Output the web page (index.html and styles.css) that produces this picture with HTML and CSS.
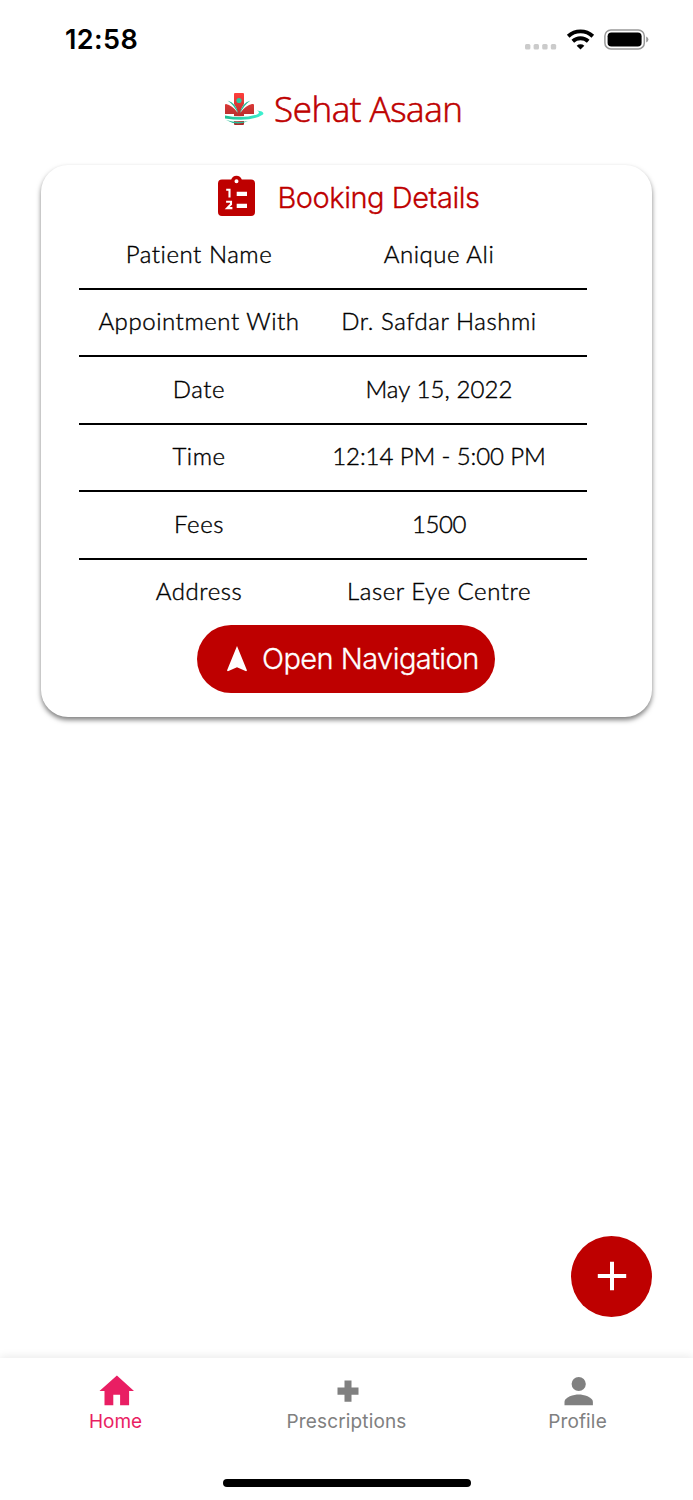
FILE: index.html
```html
<!DOCTYPE html>
<html lang="en">
<head>
<meta charset="utf-8">
<title>Sehat Asaan</title>
<link rel="stylesheet" href="styles.css">
</head>
<body>
<div class="screen">
  <header class="status">
    <span class="clock">12:58</span>
    <svg class="indicators" width="126" height="24" viewBox="0 0 126 24">
      <g fill="#cbcbcb"><rect x="1" y="16" width="5.4" height="5.4" rx="1.5"/><rect x="9.6" y="16" width="5.4" height="5.4" rx="1.5"/><rect x="18.2" y="16" width="5.4" height="5.4" rx="1.5"/><rect x="26.8" y="16" width="5.4" height="5.4" rx="1.5"/></g>
      <g fill="none" stroke="#000" stroke-width="3.9"><path d="M44.2 8.2a18.2 18.2 0 0 1 24.6 0"/><path d="M48.8 13.3a11.4 11.4 0 0 1 15.4 0"/></g>
      <path d="M56.5 21.5l-3.800-3.800a5.600 5.600 0 0 1 7.600 0z"/>
      <rect x="80.9" y="1.9" width="39.4" height="19" rx="6" fill="none" stroke="#999" stroke-width="1.5"/>
      <rect x="83.6" y="4.5" width="34" height="14" rx="3.8"/>
      <path d="M122.2 8.5q2.2 1 2.2 3t-2.2 3z" fill="#999"/>
    </svg>
  </header>
  <div class="brand">
    <svg width="42" height="36" viewBox="0 0 42 36">
      <defs>
        <linearGradient id="cross" x1="0" y1="0" x2="0" y2="1"><stop offset="0" stop-color="#ff3f3c"/><stop offset=".55" stop-color="#c63332"/><stop offset="1" stop-color="#a92829"/></linearGradient>
        <linearGradient id="swoosh"><stop offset="0" stop-color="#20bd92"/><stop offset="1" stop-color="#3df1d0"/></linearGradient>
      </defs>
      <path d="M11 3q0-1 1-1h8q1 0 1 1v10h9q1 0 1 1v9H21v10q0 1-1 1h-8q-1 0-1-1V23H2v-9q0-1 1-1h8z" fill="url(#cross)"/>
      <path d="M3.500 8.500q9 2 11 13Q9 14 3 13zM28.500 8.500q-9 2-11 13Q23 14 29 13z" fill="#fff"/>
      <path d="M4.500 9.500q9 2.500 10.500 13Q11 14 4.500 9.500zM27.500 9.500q-9 2.500-10.500 13Q21 14 27.500 9.500z" fill="#29bd98"/>
      <circle cx="16" cy="9.500" r="2.600" fill="#2ac8a2"/>
      <path d="M1.500 23.500q19 4.500 35-2l-4 6Q17 32 2 29z" fill="#fff"/>
      <path d="M2 24.500q18 3.500 32-1 4-2 0-4 8 1 6 4-12 8-38 4z" fill="url(#swoosh)"/>
      <path d="M3 29q11 3.500 22 1-11 5.500-22-1z" fill="#29bd98"/>
    </svg>
    <h1 class="brand-name">Sehat Asaan</h1>
  </div>
  <main class="card">
    <div class="card-head">
      <svg width="37" height="42" viewBox="0 0 37 42">
        <path fill="#be0000" fill-rule="evenodd" d="M4 4.500h9.200a5.600 5.600 0 0 1 10.600 0H33a4 4 0 0 1 4 4V37a4 4 0 0 1-4 4H4a4 4 0 0 1-4-4V8.500a4 4 0 0 1 4-4zM18.500 4.300a2 2 0 1 0 0 4 2 2 0 0 0 0-4z"/>
        <path d="M18.700 16.700H29V21H18.700zM18.700 28.700H29V33H18.700z" fill="#fff"/>
        <g fill="none" stroke="#fff" stroke-width="2.100"><path d="M8.200 14.800h3.300v7.700"/><path d="M8.100 26.800h4.900v2.400l-3.800 3.900h5.200"/></g>
      </svg>
      <h2 class="card-title">Booking Details</h2>
    </div>
    <dl class="rows">
      <div class="row"><dt>Patient Name</dt><dd>Anique Ali</dd></div>
      <div class="row"><dt>Appointment With</dt><dd>Dr. Safdar Hashmi</dd></div>
      <div class="row"><dt>Date</dt><dd class="numeric">May 15, 2022</dd></div>
      <div class="row"><dt>Time</dt><dd class="numeric hours">12:14 PM - 5:00 PM</dd></div>
      <div class="row"><dt>Fees</dt><dd class="numeric fee">1500</dd></div>
      <div class="row"><dt>Address</dt><dd>Laser Eye Centre</dd></div>
    </dl>
    <button class="navigate">
      <svg width="20" height="26" viewBox="0 0 20 26"><path d="M10 0l10 24.400-.9.900L10 21.300.9 25.300 0 24.400z" fill="#fff"/></svg>
      <span>Open Navigation</span>
    </button>
  </main>
  <div class="action-area">
    <button class="add" aria-label="Add">
      <svg width="30" height="30" viewBox="0 0 30 30"><path d="M15 .8v28.400M.8 15h28.400" stroke="#fff" stroke-width="4"/></svg>
    </button>
  </div>
  <nav class="tabs">
    <a class="tab active">
      <svg width="36" height="31" viewBox="0 0 36 31"><path d="M18.900 .5L36 16h-4.900v14.300h-9V19.700h-6.800v10.600H6.500V16h-5z" fill="currentColor"/></svg>
      <span>Home</span>
    </a>
    <a class="tab">
      <svg width="36" height="31" viewBox="0 0 36 31"><path d="M15.500 5.500h7v7h7v7.200h-7v7h-7v-7h-7v-7.200h7z" fill="currentColor"/></svg>
      <span class="prescriptions-label">Prescriptions</span>
    </a>
    <a class="tab">
      <svg width="36" height="31" viewBox="0 0 36 31"><circle cx="18.700" cy="9" r="7.100" fill="currentColor"/><path d="M4.500 30.300v-3.500c0-4.800 9.500-7.300 14.200-7.300s14.200 2.500 14.200 7.300v3.500z" fill="currentColor"/></svg>
      <span class="profile-label">Profile</span>
    </a>
  </nav>
  <footer class="home-indicator"><i></i></footer>
</div>
</body>
</html>
```
FILE: styles.css
```css
* { box-sizing: border-box; }
body { margin: 0; background: #fff; font-family: Inter, sans-serif; }
.screen { width: 693px; height: 1500px; display: flex; flex-direction: column; overflow: hidden; }
.status { height: 80px; padding: 0 43px 0 65px; display: flex; align-items: center; justify-content: space-between; }
.clock { font-size: 27px; font-weight: 600; line-height: 34px; letter-spacing: .4px; }
.indicators { display: block; }
.brand { height: 85px; padding: 11px 0 0 223px; display: flex; align-items: flex-start; gap: 9px; }
.brand-name { margin: -6px 0 0 0; font: 300 35px/48px "Open Sans", sans-serif; letter-spacing: -.45px; -webkit-text-stroke: .6px #be0000; color: #be0000; white-space: nowrap; }
.card { height: 552px; margin: 0 41px; border-radius: 27px; background: #fff; box-shadow: 0 3px 5px rgba(0,0,0,.5); display: flex; flex-direction: column; align-items: center; }
.card-head { align-self: flex-start; height: 57px; padding: 10px 0 0 177.400px; display: flex; gap: 22px; }
.card-title { margin: 4px 0 0; font-size: 29px; font-weight: 300; line-height: 38px; letter-spacing: -.45px; -webkit-text-stroke: .3px #be0000; color: #be0000; white-space: nowrap; }
.rows { width: 508px; margin: 0 0 0 38px; align-self: flex-start; }
.row { height: 67.500px; padding: 0 28px 2px 0; display: grid; grid-template-columns: 240px 240px; align-items: center; border-bottom: 2px solid #000; font: 300 24px/32px Lato, sans-serif; text-align: center; letter-spacing: .55px; -webkit-text-stroke: .4px #000; color: #000; white-space: nowrap; }
.row:last-child { border-bottom: 0; padding-bottom: 4px; }
.row dt, .row dd { margin: 0; }
.row .numeric { letter-spacing: .1px; }
.row .hours { letter-spacing: -.1px; }
.row .fee { letter-spacing: -.4px; }
.navigate { margin: -2px 1px 0 0; width: 298px; height: 67.500px; padding: 0 0 0 30px; border: 0; border-radius: 34px; background: #be0000; color: #fff; display: flex; align-items: center; gap: 15px; font: 300 29px/38px Inter, sans-serif; letter-spacing: -.55px; -webkit-text-stroke: .3px #fff; white-space: nowrap; }
.navigate span { padding-top: 1px; }
.action-area { flex: 1; padding: 0 41px 41px 0; display: flex; justify-content: flex-end; align-items: flex-end; }
.add { width: 81px; height: 81px; padding: 0 0 1px; border: 0; border-radius: 50%; background: #be0000; display: grid; place-items: center; }
.tabs { height: 96px; padding-top: 17px; display: grid; grid-template-columns: repeat(3, 1fr); background: #fff; box-shadow: 0 -2px 8px rgba(0,0,0,.08); }
.tab { display: flex; flex-direction: column; align-items: center; font-size: 19px; line-height: 32px; color: #808080; }
.tab.active { color: #e91e63; }
.prescriptions-label { letter-spacing: .15px; }
.profile-label { letter-spacing: .15px; }
.home-indicator { position: relative; background: #fff; height: 46px; padding-top: 25px; display: flex; justify-content: center; }
.home-indicator i { width: 248px; height: 8px; border-radius: 4px; background: #000; }
```
